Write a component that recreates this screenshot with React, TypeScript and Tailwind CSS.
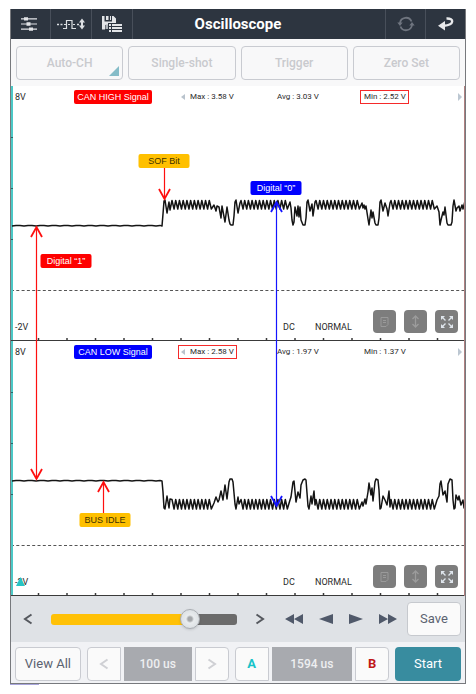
import { useState } from "react";
import type { ReactNode } from "react";
import clsx from "clsx";

type Point = [number, number];

// both channels share one coordinate system
const PLOT = { left: 11, top: 86, width: 454, height: 510 };
const CHANNEL_HEIGHT = 255;
const VIEW_BOX = `${PLOT.left} ${PLOT.top} ${PLOT.width} ${PLOT.height}`;

// saw-tooth ripple between two levels
function ripple(from: number, to: number, start: number, end: number): Point[] {
  const count = Math.round((to - from) / 3.8);
  const step = (to - from) / count;
  const points: Point[] = [];
  for (let i = 0; i < count; i++) {
    points.push([from + i * step, start], [from + (i + 0.55) * step, end]);
  }
  return points;
}

function highRipple(from: number, to: number) {
  return ripple(from, to, 200.5, 209);
}

function lowRipple(from: number, to: number) {
  return ripple(from, to, 499.5, 509);
}

function idle(from: number, to: number, level: number): Point[] {
  const points: Point[] = [];
  for (let x = from; x < to; x += 4) {
    points.push([x, level + (x % 3 === 0 ? 0.3 : -0.2)]);
  }
  return points;
}

const canHigh: Point[] = [
  ...idle(12, 161, 225.6),
  [162, 226], [163, 214], [164, 201], [165, 200], [167, 213], [169, 202], [170, 210],
  ...highRipple(172, 213),
  [214, 205], [216, 211], [217, 206], [219, 207], [221, 218], [222, 206], [225, 222],
  [227, 207], [229, 220], [230, 224], [231, 225], [233, 225], [234, 216], [235, 202],
  [236, 200], [238, 213], [240, 203],
  ...highRipple(241, 289),
  [290, 202], [291, 208], [292, 220], [293, 225], [294, 222], [295, 207], [297, 216],
  [298, 206], [299, 217], [300, 207], [301, 220], [303, 225], [305, 225], [306, 218],
  [307, 202], [308, 200], [310, 211], [312, 204], [313, 216], [315, 202],
  ...highRipple(316, 361),
  [362, 203], [363, 208], [364, 205], [365, 209], [366, 206], [368, 219], [369, 225],
  [371, 210], [372, 218], [373, 212], [375, 223], [376, 225], [378, 225], [379, 218],
  [380, 202], [381, 200], [383, 211], [385, 203], [387, 209], [388, 216], [390, 203],
  ...highRipple(391, 436),
  [437, 206], [439, 212], [440, 225], [441, 220], [443, 212], [444, 215], [445, 207],
  [447, 223], [448, 225], [451, 225], [452, 222], [453, 206], [454, 200], [456, 211],
  [457, 208], [459, 206], [460, 211], [462, 205], [463, 209], [465, 201], [466, 208],
];

const canLow: Point[] = [
  ...idle(12, 161, 480.8),
  [162, 481], [163, 492], [164, 508], [165, 509], [167, 496], [169, 508], [170, 499],
  ...lowRipple(172, 213),
  [214, 503], [216, 497], [218, 502], [219, 500], [221, 491], [223, 500], [225, 485],
  [227, 499], [229, 482], [230, 479], [232, 479], [233, 482], [235, 504], [236, 509],
  [238, 497], [239, 504],
  ...lowRipple(241, 289),
  [290, 500], [291, 497], [293, 482], [294, 481], [296, 502], [298, 492], [300, 498],
  [301, 485], [303, 480], [305, 479], [306, 480], [308, 506], [309, 509], [311, 496],
  [312, 504], [314, 491], [315, 505],
  ...lowRipple(316, 361),
  [362, 502], [363, 506], [365, 499], [366, 504], [368, 492], [369, 483], [371, 495],
  [372, 488], [373, 501], [375, 482], [376, 479], [378, 480], [379, 490], [380, 509],
  [381, 508], [383, 496], [385, 500], [387, 505], [389, 491], [390, 507],
  ...lowRipple(391, 436),
  [437, 500], [439, 496], [440, 484], [441, 481], [443, 495], [445, 491], [447, 502],
  [448, 484], [450, 479], [452, 480], [453, 500], [454, 509], [455, 508], [456, 495],
  [458, 500], [459, 496], [461, 505], [463, 500], [464, 508], [466, 500],
];

const toLine = (points: Point[]) => points.map((p) => p.join(",")).join(" ");

const modes = ["Auto-CH", "Single-shot", "Trigger", "Zero Set"];

const channels = [
  {
    id: "high",
    name: "CAN HIGH Signal",
    badge: "bg-[#fe0000]",
    max: "3.58 V",
    avg: "3.03 V",
    min: "2.52 V",
    marked: "min",
    marker: false,
  },
  {
    id: "low",
    name: "CAN LOW Signal",
    badge: "bg-[#0000fe]",
    max: "2.58 V",
    avg: "1.97 V",
    min: "1.37 V",
    marked: "max",
    marker: true,
  },
];

const notes = [
  { text: "SOF Bit", x: 164, y: 154, style: "bg-[#ffc000] text-[#3d3000]" },
  { text: "Digital “0”", x: 276, y: 181, style: "bg-[#0000fe] text-white" },
  { text: "Digital “1”", x: 66, y: 254, style: "bg-[#fe0000] text-white" },
  { text: "BUS IDLE", x: 105, y: 513, style: "bg-[#ffc000] text-[#3d3000]" },
];

function SlidersIcon() {
  return (
    <svg className="mr-1" width="16" height="16" viewBox="0 0 16 16" fill="#e2e4e7">
      <path d="M0 2.3h16v1.2H0zM0 7.4h16v1.2H0zM0 12.5h16v1.2H0z" />
      <path d="M3 1.2h4v3.4H3zM5.5 6.3h4v3.4h-4zM8 11.4h4v3.4H8z" />
    </svg>
  );
}

function PulseIcon() {
  return (
    <svg width="28" height="14" viewBox="0 0 28 14" fill="none" stroke="#dcdfe2">
      <path d="M0 7.5h2M3.5 7.5h2M20 7.5h2" strokeWidth="1.4" />
      <path d="M6 11.5h3.5v-8H15v8h4" strokeWidth="1.2" />
      <path d="M7 7.5h2M11 7.5h2M16 7.5h2" strokeWidth="1.2" />
      <path d="M25 4v6" strokeWidth="2" />
      <path d="M25 1.5l3 4h-6zM25 12.5l3-4h-6z" fill="#dcdfe2" stroke="none" />
    </svg>
  );
}

function SaveListIcon() {
  return (
    <svg width="20" height="18" viewBox="0 0 20 18" fill="#e2e4e7">
      <path d="M0 1h2.5v5.5H10V1h1.5L14 3.5V8H6v2H3v4.5H0zM4 1h2.5v4H4zM8 1h1v4H8z" />
      <path d="M3.5 9.5H6V14H3.5z" fill="#aeb3b9" />
      <path d="M7 9h2v2H7zM10 9h10v2H10zM7 12h2v2H7zM10 12h10v2H10zM7 15h2v2H7zM10 15h10v2H10z" />
    </svg>
  );
}

function RefreshIcon() {
  return (
    <svg width="18" height="16" viewBox="0 0 18 16" fill="none" stroke="#6f757f" strokeWidth="1.8">
      <path d="M3 7A6 6 0 0 1 14.5 5.5M15 9A6 6 0 0 1 3.5 10.5" />
      <path d="M.3 6.500h5.400L3 10zM17.700 9.500h-5.400L15 6z" fill="#6f757f" stroke="none" />
    </svg>
  );
}

function ReturnIcon() {
  return (
    <svg width="16" height="14" viewBox="0 0 16 14">
      <path d="M8.5 1.500C16.500 1 16.500 8 6 8.800" fill="none" stroke="#e8e9eb" strokeWidth="2.4" />
      <path d="M7 4v9.500L0 8.800z" fill="#e8e9eb" />
    </svg>
  );
}

function HeaderButton({ label, className, children }: { label: string; className: string; children: ReactNode }) {
  return (
    <button
      aria-label={label}
      className={clsx("flex h-full items-center justify-center border-[#484f5a]", className)}
    >
      {children}
    </button>
  );
}

function Header() {
  return (
    <header className="grid h-[30px] grid-cols-[1fr_auto_1fr] items-center bg-[#2d3540]">
      <div className="flex h-full">
        <HeaderButton label="Settings" className="w-10 border-r"><SlidersIcon /></HeaderButton>
        <HeaderButton label="Pulse" className="w-[41px] border-r"><PulseIcon /></HeaderButton>
        <HeaderButton label="Save list" className="w-[41px] border-r"><SaveListIcon /></HeaderButton>
      </div>
      <h1 className="text-[15px] font-bold text-white">Oscilloscope</h1>
      <div className="flex h-full justify-end">
        <HeaderButton label="Refresh" className="w-10 border-l"><RefreshIcon /></HeaderButton>
        <HeaderButton label="Back" className="w-10 border-l"><ReturnIcon /></HeaderButton>
      </div>
    </header>
  );
}

function ModeBar() {
  return (
    <div className="grid h-[47px] grid-cols-4 gap-[5px] bg-[#f8f8f9] px-[5px] pt-[7px] pb-[6px]">
      {modes.map((mode, index) => (
        <button
          key={mode}
          className="relative rounded-[4px] border border-[#c9cbd1] text-xs font-medium text-[#c9cace]"
        >
          {mode}
          {index === 0 && (
            <svg className="absolute right-[3px] bottom-[3px]" width="10" height="10" viewBox="0 0 10 10">
              <path d="M10 0v10H0z" fill="#85bcc8" />
            </svg>
          )}
        </button>
      ))}
    </div>
  );
}

function Reading({ label, value, marked, arrow }: { label: string; value: string; marked: boolean; arrow?: boolean }) {
  return (
    <span
      className={clsx(
        "flex h-[14px] items-center border pr-[2px] text-[8px] whitespace-nowrap",
        arrow ? "pl-[2px]" : "pl-[3px]",
        marked ? "border-[#f52a2a]" : "border-transparent",
      )}
    >
      {arrow && (
        <svg className="mr-[5px]" width="4" height="6" viewBox="0 0 4 6">
          <path d="M4 0v6L0 3z" fill="#b9c3cd" />
        </svg>
      )}
      {label} : {value}
    </span>
  );
}

function ToolButton({ label, children }: { label: string; children: ReactNode }) {
  return (
    <button
      aria-label={label}
      className="flex size-[23px] items-center justify-center rounded-[4px] bg-[#7d7d7d]"
    >
      {children}
    </button>
  );
}

function Channel({ channel }: { channel: (typeof channels)[number] }) {
  return (
    <section className="flex h-[255px] flex-col justify-between text-[#2a2a2a]">
      <div className="grid grid-cols-[63px_104px_1fr_1fr_1fr_26px] items-center pt-1">
        <span className="pl-1 text-[9px] leading-[14px]">8V</span>
        <span
          className={clsx(
            "h-[14px] w-[78px] rounded-[2px] text-center font-['Liberation_Sans'] text-[9px] leading-[14px] whitespace-nowrap text-white",
            channel.badge,
          )}
        >
          {channel.name}
        </span>
        <div className="flex">
          <Reading label="Max" value={channel.max} marked={channel.marked === "max"} arrow />
        </div>
        <div className="flex pl-2">
          <Reading label="Avg" value={channel.avg} marked={false} />
        </div>
        <div className="flex pl-2">
          <Reading label="Min" value={channel.min} marked={channel.marked === "min"} />
        </div>
        <svg className="mr-[3px] justify-self-end" width="4" height="8" viewBox="0 0 4 8">
          <path d="M0 0v8l4-4z" fill="#bcc7d2" />
        </svg>
      </div>
      <div className="flex items-end justify-between pr-[7px] pb-2">
        <span className="relative pl-1 text-[9px] leading-3">
          -2V
          {channel.marker && (
            <svg className="absolute top-[1px] left-[5px]" width="9" height="9" viewBox="0 0 9 9">
              <path d="M4.5 0L9 9H0z" fill="#27c4c4" />
            </svg>
          )}
        </span>
        <div className="flex items-end">
          <span className="w-8 text-[9px] leading-3">DC</span>
          <span className="w-[58px] text-[9px] leading-3">NORMAL</span>
          <div className="flex gap-2">
            <ToolButton label="Copy">
              <svg width="11" height="12" viewBox="0 0 11 12" fill="none" stroke="#9a9a9a">
                <path d="M2 1.5h7v7l-2 2H2zM4 4.5h3M4 6.5h3" />
              </svg>
            </ToolButton>
            <ToolButton label="Fit height">
              <svg width="9" height="13" viewBox="0 0 9 13" fill="none" stroke="#9c9c9c" strokeWidth="1.3">
                <path d="M4.5 1v11M1.5 4l3-3 3 3M1.5 9l3 3 3-3" />
              </svg>
            </ToolButton>
            <ToolButton label="Full screen">
              <svg width="12" height="12" viewBox="0 0 12 12" fill="#dfe5ec" stroke="#dfe5ec">
                <path d="M1 1l3.500 3.500M11 1L7.500 4.500M1 11l3.500-3.500M11 11L7.500 7.500" strokeWidth="1.4" />
                <path d="M0 0h4L0 4zM12 0H8l4 4zM0 12h4L0 8zM12 12H8l4-4z" stroke="none" />
              </svg>
            </ToolButton>
          </div>
        </div>
      </div>
    </section>
  );
}

function Axes({ top }: { top: number }) {
  const bottom = top + CHANNEL_HEIGHT;
  const ticks = Array.from({ length: 15 }, (_, i) => 38.5 + i * 28.5);
  return (
    <g stroke="#3a3a3a">
      <path d={`M11 ${bottom - 0.5}H465`} />
      {ticks.map((x) => (
        <path key={x} d={`M${x} ${bottom - 3}v3`} strokeWidth="1.5" />
      ))}
      <path d={`M11 ${top + 204.5}H465`} stroke="#555" strokeDasharray="3 2.3" />
      <path d={`M12 ${top}v${CHANNEL_HEIGHT - 1}`} stroke="#4cc8c6" strokeWidth="2" />
      {[1, 2, 3].map((i) => (
        <path key={i} d={`M11 ${top + i * 51 + 0.5}h2`} stroke="#25686b" />
      ))}
    </g>
  );
}

function Traces() {
  return (
    <svg
      className="absolute inset-0 h-full w-full"
      viewBox={VIEW_BOX}
      preserveAspectRatio="none"
      fill="none"
    >
      <Axes top={86} />
      <Axes top={341} />
      <g stroke="#141414" strokeWidth="1.5" strokeLinejoin="round">
        <polyline points={toLine(canHigh)} />
        <polyline points={toLine(canLow)} />
      </g>
      <path d="M464.5 86v510" stroke="#b08080" />
    </svg>
  );
}

function Arrows() {
  return (
    <svg
      className="pointer-events-none absolute inset-0 h-full w-full"
      viewBox={VIEW_BOX}
      preserveAspectRatio="none"
      fill="none"
    >
      <g stroke="#fe0f0f" strokeWidth="1.2">
        <path d="M36.5 228v250M164.5 167v31M103.5 513v-30" />
        <path
          d="M31 237l5.5-10 5.5 10M31 469l5.5 10 5.5-10M159 189l5.5 10 5.5-10M98 492l5.5-10 5.5 10"
          strokeWidth="1.8"
        />
      </g>
      <g stroke="#1414ff" strokeWidth="1.2">
        <path d="M276.5 203v303" />
        <path d="M271 212l5.5-10 5.5 10M271 496l5.5 10 5.5-10" strokeWidth="1.8" />
      </g>
    </svg>
  );
}

function Scope() {
  return (
    <div className="relative bg-white">
      <Traces />
      <div className="relative">
        {channels.map((channel) => (
          <Channel key={channel.id} channel={channel} />
        ))}
      </div>
      <Arrows />
      {notes.map((note) => (
        <span
          key={note.text}
          className={clsx(
            "absolute h-[14px] w-[51px] -translate-x-1/2 rounded-[2px] text-center font-['Liberation_Sans'] text-[9px] leading-[14px] whitespace-nowrap",
            note.style,
          )}
          style={{
            left: `${((note.x - PLOT.left) / PLOT.width) * 100}%`,
            top: note.y - PLOT.top,
          }}
        >
          {note.text}
        </span>
      ))}
    </div>
  );
}

function Chevron({ left, color }: { left?: boolean; color: string }) {
  return (
    <svg width="10" height="12" viewBox="0 0 10 12" fill="none" stroke={color} strokeWidth="2">
      <path d={left ? "M8.5 1.5L2 6l6.5 4.5" : "M1.5 1.5L8 6l-6.5 4.5"} />
    </svg>
  );
}

const steps = [
  { label: "Rewind", width: 18, d: "M9 1v10L0 6zM18 1v10L9 6z" },
  { label: "Step back", width: 14, d: "M14 1v10L0 6z" },
  { label: "Step forward", width: 14, d: "M0 1v10l14-5z" },
  { label: "Fast forward", width: 18, d: "M0 1v10l9-5zM9 1v10l9-5z" },
];

function Transport() {
  const [position, setPosition] = useState(78);

  return (
    <div className="flex h-[46px] items-center bg-[#dfe2e6] pr-1 pl-3">
      <button aria-label="Earlier"><Chevron left color="#55585e" /></button>
      <input
        type="range"
        aria-label="Position"
        value={position}
        onChange={(e) => setPosition(Number(e.target.value))}
        className="mx-[18px] h-[11px] min-w-0 flex-1 appearance-none rounded-[3px] [&::-webkit-slider-thumb]:size-5 [&::-webkit-slider-thumb]:appearance-none [&::-webkit-slider-thumb]:rounded-full [&::-webkit-slider-thumb]:border [&::-webkit-slider-thumb]:border-[#a9adb2] [&::-webkit-slider-thumb]:bg-[radial-gradient(circle,#a4a7aa_2px,#e9ecee_4px,#dde1e4_9px)] [&::-webkit-slider-thumb]:shadow-sm"
        style={{
          background: `linear-gradient(to right, #ffc107 ${position - 3}%, #6b6b6b ${position - 3}%)`,
        }}
      />
      <button aria-label="Later"><Chevron color="#55585e" /></button>
      <div className="mr-[10px] ml-5 flex items-center gap-4">
        {steps.map((step) => (
          <button key={step.label} aria-label={step.label}>
            <svg width={step.width} height="12" viewBox={`0 0 ${step.width} 12`} fill="#50596a">
              <path d={step.d} />
            </svg>
          </button>
        ))}
      </div>
      <button className="h-[34px] w-[54px] rounded-[4px] border border-[#c6c9ce] bg-[#fafafa] text-[13px] text-[#5b6270]">
        Save
      </button>
    </div>
  );
}

function BottomBar() {
  const cell = "flex items-center justify-center border border-[#c9cbd1] bg-[#fafafa]";
  const value = "flex items-center justify-center bg-[#a8aaaf] text-xs font-medium text-[#eeeff1]";

  return (
    <footer className="grid h-[41px] grid-cols-[66fr_142fr_155fr_66fr] gap-[6px] bg-[#f1f2f5] px-1 pt-[5px] pb-[2px] text-[13px]">
      <button className={clsx(cell, "rounded-[4px] text-[#5b6270]")}>View All</button>
      <div className="grid grid-cols-[34px_1fr_34px] gap-[3px]">
        <button aria-label="Shorter time base" className={clsx(cell, "rounded-l-[4px]")}>
          <Chevron left color="#cfd0d4" />
        </button>
        <output className={value}>100 us</output>
        <button aria-label="Longer time base" className={clsx(cell, "rounded-r-[4px]")}>
          <Chevron color="#cfd0d4" />
        </button>
      </div>
      <div className="grid grid-cols-[34px_1fr_34px] gap-[3px]">
        <button className={clsx(cell, "rounded-l-[4px] font-bold text-[#17c3c8]")}>A</button>
        <output className={value}>1594 us</output>
        <button className={clsx(cell, "rounded-r-[4px] font-bold text-[#c01818]")}>B</button>
      </div>
      <button className="rounded-[4px] bg-[#388c9f] text-white">Start</button>
    </footer>
  );
}

export default function App() {
  return (
    <div className="min-h-screen bg-white px-[10px] pt-[9px] font-['Roboto',sans-serif]">
      <main className="border-x border-b border-[#77797d]">
        <Header />
        <ModeBar />
        <Scope />
        <Transport />
        <BottomBar />
      </main>
      <div className="h-px w-[29px] bg-[#a9a6dc]" />
    </div>
  );
}
